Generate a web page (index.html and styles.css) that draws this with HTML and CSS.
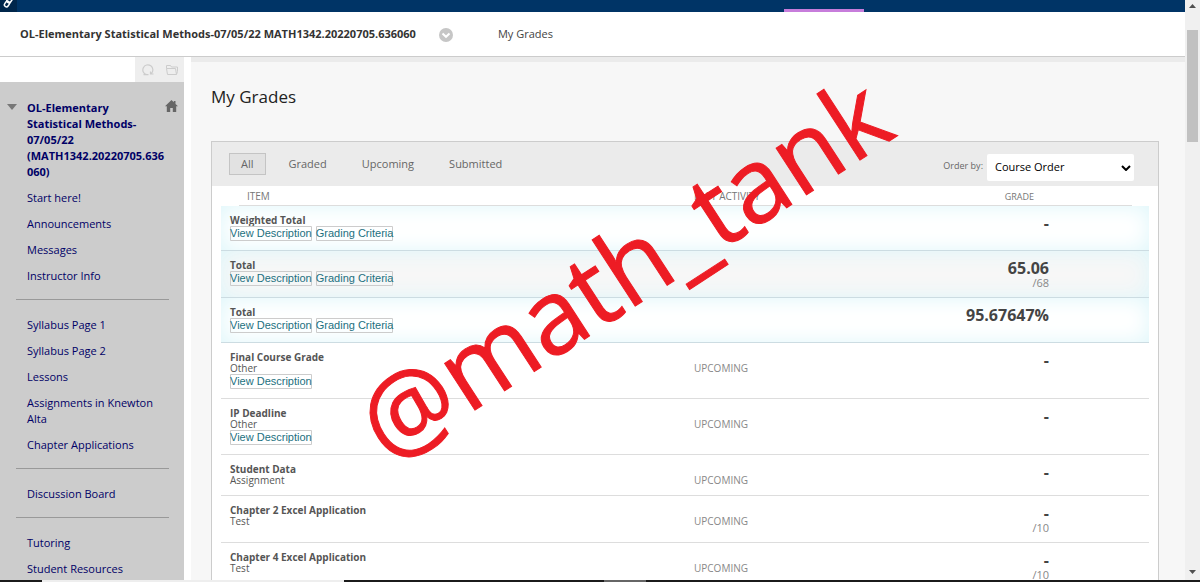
FILE: index.html
```html
<!DOCTYPE html>
<html lang="en">

<head>
  <meta charset="utf-8">
  <meta name="viewport" content="width=device-width, initial-scale=1">
  <title>My Grades</title>
  <link rel="stylesheet" href="styles.css">
</head>

<body>
  <div class="window">
    <div class="page">
      <header class="topbar">
        <a class="quick-links" href="#" aria-label="Quick Links">
          <svg width="17" height="12" viewBox="0 0 17 12" fill="none" stroke="#fff" stroke-width="1.500">
            <rect x="7.500" y="-4" width="4" height="7" rx="2" transform="rotate(35 9.500 0)"/>
            <rect x="5" y="1" width="4" height="6" rx="2" transform="rotate(35 7 4)"/>
          </svg>
        </a>
        <span class="active-tab"></span>
      </header>

      <nav class="crumbs">
        <a class="course" href="#">OL-Elementary Statistical Methods-07/05/22 MATH1342.20220705.636060</a>
        <button class="crumb-menu" aria-label="Course menu">
          <svg width="14" height="14" viewBox="0 0 14 14">
            <circle cx="7" cy="7" r="7" fill="#c6c6c6"/>
            <path d="M3.500 5.500L7 8.800l3.500-3.300" fill="none" stroke="#fff" stroke-width="2"/>
          </svg>
        </button>
        <span class="current">My Grades</span>
      </nav>

      <div class="columns">
        <aside class="sidebar">
          <div class="tools">
            <button aria-label="Refresh">
              <svg width="12" height="12" viewBox="0 0 12 12" fill="none" stroke="#ccc" stroke-width="1.200">
                <path d="M4.500 10.700A5 5 0 1 1 9.300 9.500M4.500 10.700H1.500M8.500 7.500v2.500h3M4.500 10.700h2"/>
              </svg>
            </button>
            <button aria-label="Display course menu in a window">
              <svg width="12" height="12" viewBox="0 0 12 12" fill="none" stroke="#ccc">
                <path d="M1.500 10.500L.5 4.500h9l1 6zM.5 4.500v-3h4l1 1.500h6v4.500l-1 3"/>
              </svg>
            </button>
          </div>

          <div class="menu">
            <div class="menu-title">
              <svg class="arrow" width="10" height="6" viewBox="0 0 10 6"><path d="M0 0h10L5 6z" fill="#777"/></svg>
              <a href="#">OL-Elementary<br>Statistical Methods-07/05/22 (MATH1342.20220705.636060)</a>
              <svg class="home" width="13" height="12" viewBox="0 0 13 12"><path d="M6.500 0L0 6.300h1.800V12h3.400V8h2.600v4h3.400V6.300H13L10.500 3.900V1H8.800v1.200z" fill="#666"/></svg>
            </div>
            <ul>
              <li><a href="#">Start here!</a></li>
              <li><a href="#">Announcements</a></li>
              <li><a href="#">Messages</a></li>
              <li><a href="#">Instructor Info</a></li>
            </ul>
            <hr>
            <ul>
              <li><a href="#">Syllabus Page 1</a></li>
              <li><a href="#">Syllabus Page 2</a></li>
              <li><a href="#">Lessons</a></li>
              <li><a href="#">Assignments in Knewton Alta</a></li>
              <li><a href="#">Chapter Applications</a></li>
            </ul>
            <hr>
            <ul>
              <li><a href="#">Discussion Board</a></li>
            </ul>
            <hr>
            <ul>
              <li><a href="#">Tutoring</a></li>
              <li><a href="#">Student Resources</a></li>
            </ul>
          </div>
        </aside>

        <main class="content">
          <h1>My Grades</h1>

          <section class="grades">
            <div class="filters">
              <button class="selected">All</button>
              <button>Graded</button>
              <button>Upcoming</button>
              <button>Submitted</button>
              <label for="order">Order by:</label>
              <div class="select">
                <select id="order">
                  <option>Course Order</option>
                </select>
                <svg width="10" height="6" viewBox="0 0 10 6"><path d="M1 1l4 4 4-4" fill="none" stroke="#000" stroke-width="2"/></svg>
              </div>
            </div>

            <table>
              <thead>
                <tr>
                  <th class="item">Item</th>
                  <th class="activity">Last Activity</th>
                  <th class="grade">Grade</th>
                  <th class="end"></th>
                </tr>
              </thead>
              <tbody>
                <tr class="total">
                  <td><b>Weighted Total</b><div class="links"><button>View Description</button><button>Grading Criteria</button></div></td>
                  <td></td>
                  <td class="grade"><strong>-</strong></td>
                  <td></td>
                </tr>
                <tr class="total shaded">
                  <td><b>Total</b><div class="links"><button>View Description</button><button>Grading Criteria</button></div></td>
                  <td></td>
                  <td class="grade"><strong>65.06</strong><small>/68</small></td>
                  <td></td>
                </tr>
                <tr class="total">
                  <td><b>Total</b><div class="links"><button>View Description</button><button>Grading Criteria</button></div></td>
                  <td></td>
                  <td class="grade"><strong>95.67647%</strong></td>
                  <td></td>
                </tr>
                <tr>
                  <td><b>Final Course Grade</b>Other<div class="links"><button>View Description</button></div></td>
                  <td class="status">Upcoming</td>
                  <td class="grade"><strong>-</strong></td>
                  <td></td>
                </tr>
                <tr>
                  <td><b>IP Deadline</b>Other<div class="links"><button>View Description</button></div></td>
                  <td class="status">Upcoming</td>
                  <td class="grade"><strong>-</strong></td>
                  <td></td>
                </tr>
                <tr>
                  <td><b>Student Data</b>Assignment</td>
                  <td class="status">Upcoming</td>
                  <td class="grade"><strong>-</strong></td>
                  <td></td>
                </tr>
                <tr>
                  <td><b>Chapter 2 Excel Application</b>Test</td>
                  <td class="status">Upcoming</td>
                  <td class="grade"><strong>-</strong><small>/10</small></td>
                  <td></td>
                </tr>
                <tr>
                  <td><b>Chapter 4 Excel Application</b>Test</td>
                  <td class="status">Upcoming</td>
                  <td class="grade"><strong>-</strong><small>/10</small></td>
                  <td></td>
                </tr>
              </tbody>
            </table>
          </section>
        </main>
      </div>
    </div>

    <div class="scrollbar">
      <svg width="7" height="4" viewBox="0 0 7 4"><path d="M0 4h7L3.500 0z" fill="#505050"/></svg>
      <span class="thumb"></span>
      <svg class="down" width="7" height="4" viewBox="0 0 7 4"><path d="M0 0h7L3.500 4z" fill="#505050"/></svg>
    </div>
  </div>

  <div class="taskbar"><span class="search"></span><span class="running"></span></div>

  <div class="watermark">@math_tank</div>
</body>

</html>
```
FILE: styles.css
```css
* {
  box-sizing: border-box;
}

body {
  margin: 0;
  height: 100vh;
  display: flex;
  flex-direction: column;
  overflow: hidden;
  position: relative;
  font-family: "Open Sans", "Noto Sans", sans-serif;
  font-size: 11px;
  line-height: 16px;
  color: #444;
  background: #fff;
}

a {
  color: inherit;
  text-decoration: none;
}

button {
  border: 0;
  padding: 0;
  background: none;
  font: inherit;
  color: inherit;
}

svg {
  display: block;
}

.window {
  flex: 1;
  min-height: 0;
  display: flex;
}

.page {
  flex: 1;
  min-width: 0;
  display: flex;
  flex-direction: column;
}

/* top bar and breadcrumbs */

.topbar {
  flex: none;
  display: flex;
  height: 12px;
  background: #003466;
}

.quick-links {
  width: 17px;
  background: #00264b;
}

.active-tab {
  width: 80px;
  height: 3px;
  margin: auto 321px 0 auto;
  background: #c77ddb;
}

.crumbs {
  flex: none;
  display: flex;
  align-items: center;
  height: 45px;
  padding-left: 20px;
  border-bottom: 1px solid #ccc;
}

.course {
  font-weight: bold;
  color: #333;
}

.crumb-menu {
  margin: 2px 45px 0 23px;
}

.columns {
  flex: 1;
  min-height: 0;
  display: flex;
}

/* course menu */

.sidebar {
  flex: none;
  width: 184px;
  margin-right: 7px;
  display: flex;
  flex-direction: column;
}

.tools {
  flex: none;
  display: flex;
  align-items: center;
  justify-content: space-between;
  height: 25px;
  margin-left: 135px;
  padding: 0 6px 0 7px;
  background: #eee;
}

.menu {
  flex: 1;
  min-height: 0;
  padding: 18px 15px 0 16px;
  background: #ccc;
  color: #000066;
}

.menu-title {
  display: flex;
  font-weight: bold;
  margin: 0 -9px;
}

.menu-title a {
  flex: 1;
  min-width: 0;
  word-break: break-word;
}

.arrow {
  flex: none;
  margin: 4px 10px 0 0;
}

.home {
  flex: none;
  margin-left: -4px;
}

.menu ul {
  list-style: none;
  margin: 0;
  padding: 0 0 0 11px;
}

.menu li {
  margin: 10px 0;
}

.menu hr {
  margin: 15px 0 17px;
  border: 0;
  border-top: 1px solid #999;
}

/* grades */

.content {
  flex: 1;
  min-width: 0;
  padding: 0 26px 0 20px;
  border-top: 5px solid #ebebeb;
  background: #f7f7f7;
}

h1 {
  margin: 23px 0 32px;
  font-size: 17px;
  line-height: 24px;
  font-weight: normal;
  color: #222;
}

.grades {
  border: 1px solid #ccc;
  background: #fff;
  padding: 0 9px;
}

.filters {
  display: flex;
  align-items: center;
  height: 44px;
  margin: 0 -9px;
  padding: 0 24px 0 17px;
  background: #ebebeb;
  color: #666;
}

.filters button {
  height: 22px;
  padding: 0 11px;
  margin-right: 11px;
  border: 1px solid transparent;
}

.filters .selected {
  border-color: #c4c4c4;
  background: #e2e2e2;
}

.filters label {
  margin: 4px 4px 0 auto;
  font-size: 9px;
}

.select {
  position: relative;
  margin-top: 6px;
}

.select select {
  display: block;
  width: 147px;
  height: 27px;
  padding: 0 8px;
  appearance: none;
  border: 0;
  border-radius: 2px;
  background: #fff;
  font: inherit;
  color: #000;
}

.select svg {
  position: absolute;
  right: 3px;
  top: 11px;
  pointer-events: none;
}

table {
  width: 100%;
  table-layout: fixed;
  border-collapse: separate;
  border-spacing: 0;
  font-size: 10px;
  line-height: 11px;
  color: #555;
}

th {
  height: 20px;
  padding: 0;
  font-size: 10px;
  font-weight: normal;
  text-align: left;
  text-transform: uppercase;
  color: #777;
  background: linear-gradient(#ddd, #ddd) bottom / 100% 1px no-repeat;
}

.item {
  padding-left: 26px;
  background-size: calc(100% - 18px) 1px;
  background-position: right bottom;
}

.activity {
  width: 231px;
}

th.grade {
  width: 124px;
  padding-right: 15px;
  font-size: 9px;
}

.end {
  width: 100px;
  background-size: 83px 1px;
  background-position: left bottom;
}

td {
  vertical-align: top;
  padding: 9px 0;
  border-bottom: 1px solid #ddd;
}

td:first-child {
  padding-left: 9px;
}

td b {
  display: block;
}

td.status {
  padding-top: 20px;
  text-transform: uppercase;
  color: #888;
}

.grade {
  text-align: right;
}

td.grade small {
  display: block;
  font-size: 11px;
  line-height: 11px;
  color: #888;
}

td.grade strong {
  display: block;
  font-size: 16px;
  line-height: 17px;
  color: #444;
}

.links {
  display: flex;
  gap: 4px;
}

.links button {
  height: 15px;
  border-radius: 1px;
  box-shadow: inset 0 0 0 1px #ccc;
  font-family: "Liberation Sans", Arial, sans-serif;
  font-size: 11px;
  line-height: 15px;
  white-space: nowrap;
  color: #1c7080;
}

.total {
  background: #fff;
  box-shadow: inset 0 0 22px #ddf6fa;
}

.total.shaded {
  background: #f7f7f7;
}

.total td {
  border-color: #ccdce2;
}

/* window chrome */

.scrollbar {
  flex: none;
  width: 15px;
  display: flex;
  flex-direction: column;
  align-items: center;
  padding: 4px 0 6px;
  background: #f0f0f0;
}

.thumb {
  width: 11px;
  height: 112px;
  margin-top: 22px;
  background: #c1c1c1;
}

.down {
  margin-top: auto;
}

.taskbar {
  flex: none;
  display: flex;
  height: 2px;
  background: #1b1b1b;
}

.search {
  width: 302px;
  margin-left: 42px;
  background: #eee;
}

.running {
  width: 42px;
  margin-left: 260px;
  background: #666;
}

.watermark {
  position: absolute;
  left: 622px;
  top: 267px;
  transform: translate(-50%, -50%) rotate(-33deg);
  font-size: 104px;
  line-height: 1;
  color: #ed1c24;
  -webkit-text-stroke: 1px #ed1c24;
  pointer-events: none;
}
```
